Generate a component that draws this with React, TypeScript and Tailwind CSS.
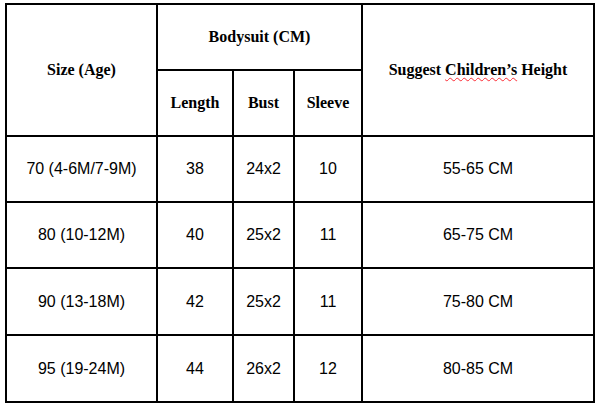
const rows = [
  { size: '70 (4-6M/7-9M)', length: '38', bust: '24x2', sleeve: '10', height: '55-65 CM' },
  { size: '80 (10-12M)', length: '40', bust: '25x2', sleeve: '11', height: '65-75 CM' },
  { size: '90 (13-18M)', length: '42', bust: '25x2', sleeve: '11', height: '75-80 CM' },
  { size: '95 (19-24M)', length: '44', bust: '26x2', sleeve: '12', height: '80-85 CM' },
]

const head = "flex items-center justify-center bg-white font-['Liberation_Serif',serif] text-[16px] font-bold text-black"
const cell = "flex items-center justify-center bg-white font-['Liberation_Sans',Arial,sans-serif] text-[16px] text-black"

export default function App() {
  return (
    <div className="min-h-[407px] w-[604px] bg-white pt-[3px] pl-[5px]">
      <div className="grid w-fit grid-cols-[149px_74px_59px_66px_230px] grid-rows-[64px_64px_64px_64px_65px_65px] gap-[2px] bg-black p-[2px]">
        <div className={`${head} row-span-2`}>Size (Age)</div>
        <div className={`${head} col-span-3`}>Bodysuit (CM)</div>
        <div className={`${head} row-span-2`}>
          <span>
            Suggest{' '}
            <span className="underline decoration-red-500 decoration-wavy decoration-1 underline-offset-2">
              Children’s
            </span>{' '}
            Height
          </span>
        </div>
        <div className={head}>Length</div>
        <div className={head}>Bust</div>
        <div className={head}>Sleeve</div>
        {rows.map((r) => (
          <div key={r.size} className="contents">
            <div className={cell}>{r.size}</div>
            <div className={cell}>{r.length}</div>
            <div className={cell}>{r.bust}</div>
            <div className={cell}>{r.sleeve}</div>
            <div className={cell}>{r.height}</div>
          </div>
        ))}
      </div>
    </div>
  )
}
